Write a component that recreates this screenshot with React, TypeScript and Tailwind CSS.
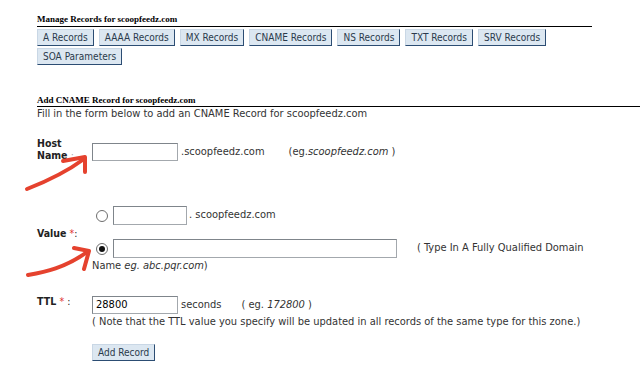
import React from 'react';

const sans = { fontFamily: '"DejaVu Sans Condensed", "DejaVu Sans", Verdana, sans-serif' };
const serif = { fontFamily: '"Liberation Serif", "Times New Roman", serif' };

const tabs = ['A Records', 'AAAA Records', 'MX Records', 'CNAME Records', 'NS Records', 'TXT Records', 'SRV Records', 'SOA Parameters'];

function Btn({ label }: { label: string }) {
  return (
    <button
      className="h-[17px] px-[5px] text-[10px] leading-none text-[#2a3a4c] bg-[#dce7f1] border border-t-[#c9d7e5] border-l-[#c9d7e5] border-b-[#2c4d73] border-r-[#2c4d73]"
      style={sans}
    >
      {label}
    </button>
  );
}

function TextBox({ w, h = 18, value }: { w: number; h?: number; value?: string }) {
  return (
    <div
      className="border border-[#a3a8ad] border-t-[#7f858b] border-l-[#7f858b] bg-white text-[11px] text-black pl-[3px] flex items-center"
      style={{ width: w, height: h, ...sans }}
    >
      {value}
    </div>
  );
}

function Radio({ checked }: { checked?: boolean }) {
  return (
    <span className="w-[12px] h-[12px] rounded-full border border-[#6d6d6d] bg-white flex items-center justify-center shrink-0">
      {checked && <span className="w-[6px] h-[6px] rounded-full bg-[#111]" />}
    </span>
  );
}

export default function App() {
  return (
    <div className="relative w-[640px] h-[366px] bg-white overflow-hidden text-[#333]" style={sans}>
      <div className="pl-[37px] pt-[14px]">
        {/* Manage records */}
        <div className="w-[555px] border-b border-black text-[9px] font-bold leading-[11px] text-black pb-[1px]" style={serif}>
          Manage Records for scoopfeedz.com
        </div>
        <div className="flex flex-wrap gap-x-[5px] gap-y-[2px] w-[560px] mt-[2px]">
          {tabs.map((t) => (
            <Btn key={t} label={t} />
          ))}
        </div>

        {/* Add CNAME */}
        <div className="mt-[30px] border-b border-black text-[9px] font-bold leading-[11px] text-black" style={serif}>
          Add CNAME Record for scoopfeedz.com
        </div>
        <div className="text-[11px] leading-[13px] text-[#333]">
          Fill in the form below to add an CNAME Record for scoopfeedz.com
        </div>

        {/* Host name */}
        <div className="flex mt-[15px]">
          <div className="w-[55px] text-[10.5px] font-bold leading-[12px] text-[#222] pt-[2px]">
            Host
            <br />
            Name <span className="font-normal text-[#aaa]">:</span>
          </div>
          <div className="flex items-center gap-[3px] pt-[8px] self-start text-[11px]">
            <TextBox w={86} />
            <span>.scoopfeedz.com</span>
            <span className="ml-[21px]">
              (eg.<i>scoopfeedz.com</i> )
            </span>
          </div>
        </div>

        {/* Value */}
        <div className="flex mt-[45px]">
          <div className="w-[55px] flex items-center text-[10.5px] font-bold text-[#222] pb-[10px]">
            Value <span className="font-normal text-[#e03030] ml-[3px]">*</span>
            <span className="font-normal">:</span>
          </div>
          <div className="flex flex-col text-[11px]">
            <div className="flex items-center">
              <span className="ml-[4px] mr-[5px]">
                <Radio />
              </span>
              <TextBox w={74} h={19} />
              <span className="ml-[2px]">. scoopfeedz.com</span>
            </div>
            <div className="flex items-center mt-[14px]">
              <span className="ml-[4px] mr-[5px]">
                <Radio checked />
              </span>
              <TextBox w={284} h={19} />
              <span className="ml-[20px]">( Type In A Fully Qualified Domain</span>
            </div>
            <div className="leading-[13px] mt-[1px]">
              Name <i>eg. abc.pqr.com</i>)
            </div>
          </div>
        </div>

        {/* TTL */}
        <div className="flex mt-[20px]">
          <div className="w-[55px] text-[10.5px] font-bold text-[#222] pt-[2px]">
            TTL <span className="font-normal text-[#e03030]">*</span>
            <span className="font-normal"> :</span>
          </div>
          <div className="flex flex-col text-[11px] pt-[4px]">
            <div className="flex items-center gap-[3px]">
              <TextBox w={86} value="28800" />
              <span>seconds</span>
              <span className="ml-[17px]">
                ( eg. <i>172800</i> )
              </span>
            </div>
            <div className="leading-[13px] mt-[1px]">
              ( Note that the TTL value you specify will be updated in all records of the same type for this zone.)
            </div>
            <div className="mt-[16px]">
              <Btn label="Add Record" />
            </div>
          </div>
        </div>
      </div>

      {/* red annotation arrows */}
      <svg className="absolute left-0 top-0 pointer-events-none" width="640" height="366">
        <g stroke="#e5422e" strokeWidth="4" fill="none" strokeLinecap="round" strokeLinejoin="round">
          <path d="M27 189 C 45 182, 65 173, 84 159" />
          <path d="M63 161 L 85 157 L 85 172" />
          <path d="M28 275 C 45 272, 65 268, 87 252" />
          <path d="M74 248 L 89 251 L 84 269" />
        </g>
      </svg>
    </div>
  );
}
